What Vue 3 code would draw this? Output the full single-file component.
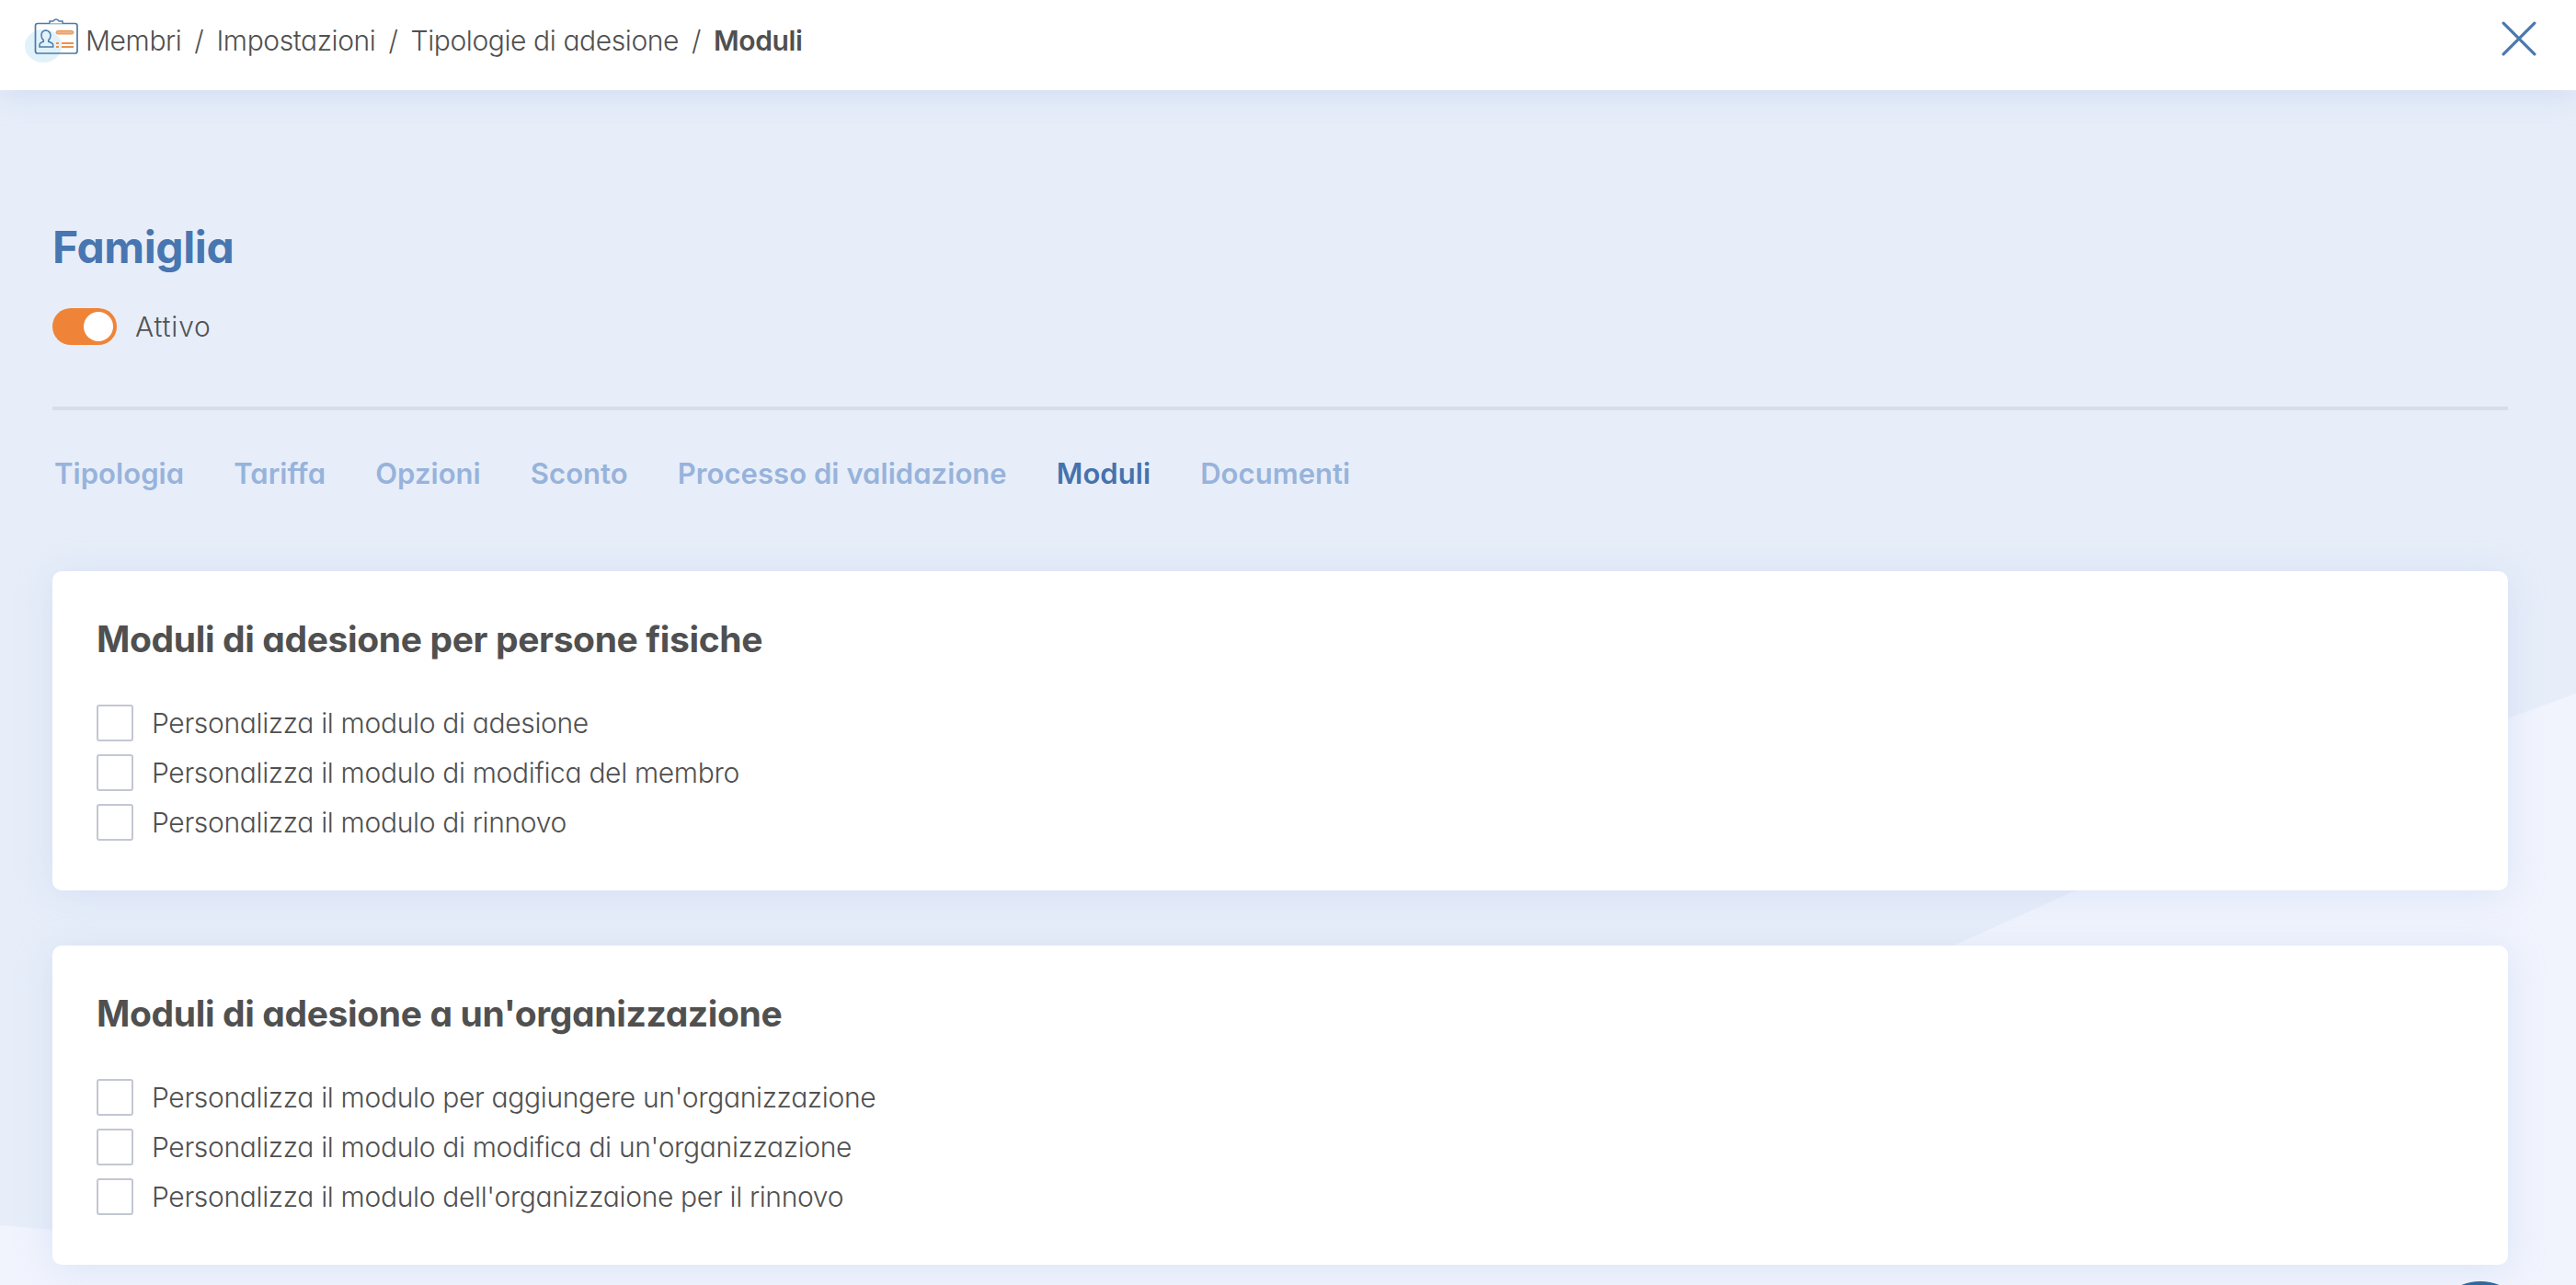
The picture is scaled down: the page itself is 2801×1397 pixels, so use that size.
<script setup>
const tabs = [
  { label: 'Tipologia', active: false },
  { label: 'Tariffa', active: false },
  { label: 'Opzioni', active: false },
  { label: 'Sconto', active: false },
  { label: 'Processo di validazione', active: false },
  { label: 'Moduli', active: true },
  { label: 'Documenti', active: false },
]
const sections = [
  {
    title: 'Moduli di adesione per persone fisiche',
    items: [
      'Personalizza il modulo di adesione',
      'Personalizza il modulo di modifica del membro',
      'Personalizza il modulo di rinnovo',
    ],
  },
  {
    title: "Moduli di adesione a un'organizzazione",
    items: [
      "Personalizza il modulo per aggiungere un'organizzazione",
      "Personalizza il modulo di modifica di un'organizzazione",
      "Personalizza il modulo dell'organizzaione per il rinnovo",
    ],
  },
]
</script>

<template>
  <div class="page">
    <svg class="backdrop" viewBox="0 0 2801 1299" preserveAspectRatio="none" aria-hidden="true">
      <path d="M0 1234 L57 1239 C900 1240 1500 1180 2122 931 L2255 871 L2727 683 L2801 656 L2801 1299 L0 1299 Z" fill="#f1f4fd" />
    </svg>

    <header class="topbar">
      <div class="crumbs">
        <svg class="crumb-icon" viewBox="20 9 70 70" aria-hidden="true">
          <ellipse cx="47" cy="50" rx="20" ry="18" fill="#e1f2fb" />
          <rect x="38.500" y="25.500" width="45.500" height="32.500" rx="2.500" fill="none" stroke="#4d7ba5" stroke-width="1.700" />
          <path d="M54 25.500v-2.500h4a3.200 3.200 0 0 1 6 0h4v2.500" fill="#fff" stroke="#4d7ba5" stroke-width="1.500" stroke-linejoin="round" />
          <path d="M49.500 33a5.500 5.500 0 0 1 5.500 5.500c0 2.600-1 4.200-2.300 5.200v1.600c2.800.8 5 1.700 5 3.700v2H43v-2c0-2 1.500-3 4.300-3.700v-1.600c-1.300-1-2.300-2.600-2.300-5.200a5.500 5.500 0 0 1 4.500-5.500Z" fill="none" stroke="#4d7ba5" stroke-width="1.500" />
          <rect x="61" y="33.500" width="19" height="3.500" rx="1.750" fill="#f0b184" stroke="#e8944f" stroke-width="1" />
          <path d="M61 47h3M67 47h13M61 51h3M67 51h13" fill="none" stroke="#e8944f" stroke-width="1.800" />
        </svg>
        <span class="crumb">Membri</span><span class="sep">/</span>
        <span class="crumb">Impostazioni</span><span class="sep">/</span>
        <span class="crumb">Tipologie di adesione</span><span class="sep">/</span>
        <span class="crumb current">Moduli</span>
      </div>
      <svg class="close" viewBox="0 0 36 36" aria-hidden="true">
        <path d="M2 2 L34 34 M34 2 L2 34" fill="none" stroke="#4a78ae" stroke-width="3" stroke-linecap="round" />
      </svg>
    </header>

    <main class="content">
      <h1 class="title">Famiglia</h1>
      <div class="status">
        <span class="toggle"><span class="knob"></span></span>
        <span class="status-label">Attivo</span>
      </div>
      <div class="divider"></div>
      <nav class="tabs">
        <span v-for="t in tabs" :key="t.label" class="tab" :class="{ active: t.active }">{{ t.label }}</span>
      </nav>
      <section v-for="s in sections" :key="s.title" class="card">
        <h2 class="card-title">{{ s.title }}</h2>
        <div class="options">
          <label v-for="i in s.items" :key="i" class="option">
            <span class="box"></span>
            <span>{{ i }}</span>
          </label>
        </div>
      </section>
    </main>

    <div class="fab"></div>
  </div>
</template>

<style>
html, body { margin: 0; padding: 0; overflow: hidden; }
</style>

<style scoped>
.page {
  position: relative;
  width: 2801px;
  height: 1397px;
  overflow: hidden;
  background: #e7eef9;
  font-family: Inter, "Noto Sans", sans-serif;
  font-feature-settings: "cv11" 1;
  color: #535353;
}
.backdrop {
  position: absolute;
  left: 0;
  top: 98px;
  width: 2801px;
  height: 1299px;
}
.topbar {
  position: relative;
  height: 98px;
  background: #fff;
  display: flex;
  align-items: center;
  justify-content: space-between;
  padding: 0 43px 0 20px;
  box-sizing: border-box;
  box-shadow: 0 6px 30px rgba(170, 190, 235, .35);
}
.crumbs {
  display: flex;
  align-items: center;
  font-size: 30px;
  letter-spacing: -.4px;
  font-weight: 300;
  color: #505050;
  margin-top: -10px;
}
.crumb-icon {
  width: 70px;
  height: 70px;
  margin-right: 3px;
  flex: none;
}
.sep { margin: 0 14px; }
.current { font-weight: 600; }
.close {
  width: 38px;
  height: 38px;
  margin-top: -14px;
  flex: none;
}
.content {
  position: relative;
  padding: 141px 74px 0 57px;
}
.title {
  margin: 0;
  font-size: 48px;
  line-height: 60px;
  font-weight: 700;
  letter-spacing: -.4px;
  color: #4876b0;
}
.status {
  margin-top: 36px;
  height: 40px;
  display: flex;
  align-items: center;
  gap: 20px;
}
.toggle {
  width: 70px;
  height: 40px;
  border-radius: 20px;
  background: #ef8438;
  display: flex;
  align-items: center;
  justify-content: flex-end;
  padding-right: 4px;
  box-sizing: border-box;
}
.knob {
  width: 32px;
  height: 32px;
  border-radius: 50%;
  background: #fff;
}
.status-label {
  font-size: 30px;
  font-weight: 300;
  letter-spacing: .8px;
}
.divider {
  margin-top: 67px;
  height: 4px;
  background: #d5deea;
}
.tabs {
  margin-top: 46px;
  display: flex;
  gap: 54px;
  padding-left: 2px;
  height: 44px;
  align-items: center;
}
.tab {
  font-size: 31px;
  font-weight: 600;
  letter-spacing: .06px;
  color: #97b3db;
}
.tab.active { color: #4672ad; }
.card {
  margin-top: 85px;
  height: 347px;
  background: #fff;
  border-radius: 10px;
  padding: 50px 48px 0;
  box-sizing: border-box;
  box-shadow: 0 4px 40px rgba(170, 190, 240, .3);
}
.card + .card { margin-top: 60px; }
.card-title {
  margin: 0;
  font-size: 39px;
  line-height: 48px;
  font-weight: 700;
  letter-spacing: -.36px;
  color: #505050;
}
.options {
  margin-top: 47px;
  display: flex;
  flex-direction: column;
  gap: 14px;
}
.option {
  display: flex;
  align-items: center;
  gap: 20px;
  height: 40px;
  font-size: 30px;
  font-weight: 300;
  letter-spacing: -.33px;
  color: #505050;
}
.box {
  width: 40px;
  height: 40px;
  border: 2px solid #c2c7d2;
  border-radius: 3px;
  box-sizing: border-box;
  flex: none;
}
.fab {
  position: absolute;
  left: 2642px;
  top: 1393px;
  width: 110px;
  height: 110px;
  border-radius: 50%;
  background: #31699f;
}
</style>
